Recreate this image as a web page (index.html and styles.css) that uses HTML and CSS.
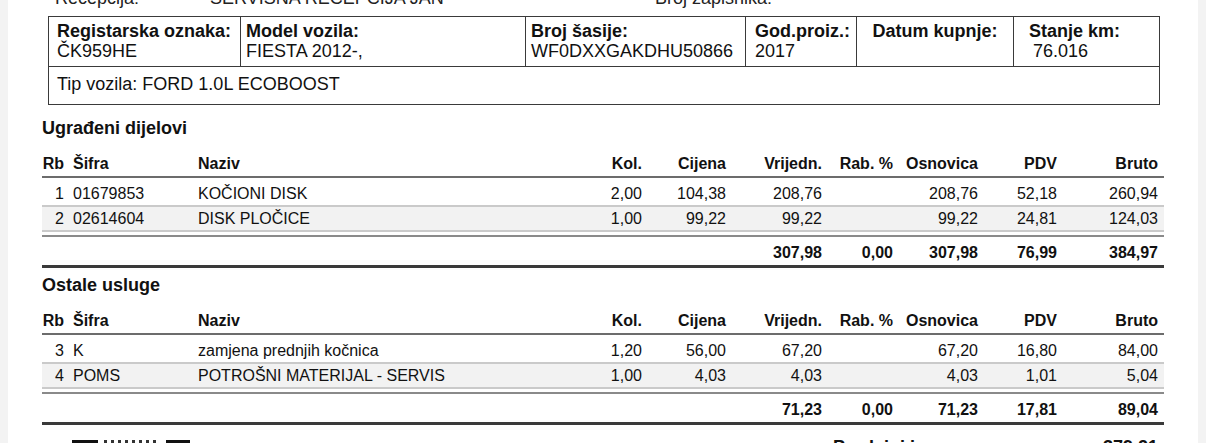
FILE: index.html
```html
<!DOCTYPE html>
<html lang="hr">
<head>
<meta charset="utf-8">
<title>Radni nalog</title>
<link rel="stylesheet" href="styles.css">
</head>
<body>
<div class="page">
  <div class="topline">
    <span class="tl-label">Recepcija:</span>
    <span class="tl-value">SERVISNA RECEPCIJA JAN</span>
    <span class="tl-label">Broj zapisnika:</span>
  </div>

  <div class="vehicle">
    <div class="vrow">
      <div class="vcell v1"><b>Registarska oznaka:</b><span>ČK959HE</span></div>
      <div class="vcell v2"><b>Model vozila:</b><span>FIESTA 2012-,</span></div>
      <div class="vcell v3"><b>Broj šasije:</b><span>WF0DXXGAKDHU50866</span></div>
      <div class="vcell v4"><b>God.proiz.:</b><span>2017</span></div>
      <div class="vcell v5"><b>Datum kupnje:</b><span></span></div>
      <div class="vcell v6"><b>Stanje km:</b><span class="km">76.016</span></div>
    </div>
    <div class="vtip">Tip vozila: FORD 1.0L ECOBOOST</div>
  </div>

  <h2 class="section">Ugrađeni dijelovi</h2>
  <div class="items">
    <div class="row head">
      <span class="r">Rb</span><span>Šifra</span><span>Naziv</span><span class="r">Kol.</span><span class="r">Cijena</span><span class="r">Vrijedn.</span><span class="r">Rab. %</span><span class="r">Osnovica</span><span class="r">PDV</span><span class="r">Bruto</span>
    </div>
    <div class="row item first">
      <span class="r">1</span><span>01679853</span><span>KOČIONI DISK</span><span class="r">2,00</span><span class="r">104,38</span><span class="r">208,76</span><span class="r"></span><span class="r">208,76</span><span class="r">52,18</span><span class="r">260,94</span>
    </div>
    <div class="row item alt">
      <span class="r">2</span><span>02614604</span><span>DISK PLOČICE</span><span class="r">1,00</span><span class="r">99,22</span><span class="r">99,22</span><span class="r"></span><span class="r">99,22</span><span class="r">24,81</span><span class="r">124,03</span>
    </div>
    <div class="row total">
      <span></span><span></span><span></span><span></span><span></span><span class="r">307,98</span><span class="r">0,00</span><span class="r">307,98</span><span class="r">76,99</span><span class="r">384,97</span>
    </div>
  </div>

  <h2 class="section">Ostale usluge</h2>
  <div class="items">
    <div class="row head">
      <span class="r">Rb</span><span>Šifra</span><span>Naziv</span><span class="r">Kol.</span><span class="r">Cijena</span><span class="r">Vrijedn.</span><span class="r">Rab. %</span><span class="r">Osnovica</span><span class="r">PDV</span><span class="r">Bruto</span>
    </div>
    <div class="row item first">
      <span class="r">3</span><span>K</span><span>zamjena prednjih kočnica</span><span class="r">1,20</span><span class="r">56,00</span><span class="r">67,20</span><span class="r"></span><span class="r">67,20</span><span class="r">16,80</span><span class="r">84,00</span>
    </div>
    <div class="row item alt">
      <span class="r">4</span><span>POMS</span><span>POTROŠNI MATERIJAL - SERVIS</span><span class="r">1,00</span><span class="r">4,03</span><span class="r">4,03</span><span class="r"></span><span class="r">4,03</span><span class="r">1,01</span><span class="r">5,04</span>
    </div>
    <div class="row total">
      <span></span><span></span><span></span><span></span><span></span><span class="r">71,23</span><span class="r">0,00</span><span class="r">71,23</span><span class="r">17,81</span><span class="r">89,04</span>
    </div>
  </div>

  <div class="footer">
    <svg class="logo" width="118" height="20" viewBox="0 0 118 20" aria-hidden="true">
      <rect x="0" y="0" width="26" height="20" fill="#111"/>
      <rect x="32" y="0" width="3" height="20" fill="#333"/>
      <rect x="39" y="0" width="3" height="20" fill="#333"/>
      <rect x="46" y="0" width="3" height="20" fill="#333"/>
      <rect x="53" y="0" width="3" height="20" fill="#333"/>
      <rect x="60" y="0" width="3" height="20" fill="#333"/>
      <rect x="67" y="0" width="3" height="20" fill="#333"/>
      <rect x="74" y="0" width="3" height="20" fill="#333"/>
      <rect x="81" y="0" width="3" height="20" fill="#333"/>
      <rect x="94" y="0" width="24" height="20" fill="#111"/>
    </svg>
    <span class="sum-label">Prodajni iznos:</span>
    <span class="sum-value">379,21</span>
  </div>
</div>
</body>
</html>
```

FILE: styles.css
```css
html, body {
  margin: 0;
  padding: 0;
  height: 100%;
}
body {
  background: #f3f3f3;
  font-family: "Liberation Sans", Arial, sans-serif;
  color: #111;
  overflow: hidden;
}
.page {
  margin: 0 8px;
  width: 1190px;
  min-height: 100%;
  background: #fff;
  padding-left: 34px;
  box-sizing: border-box;
}
.topline {
  display: grid;
  grid-template-columns: 155px 445px auto;
  margin-top: -12px;
  padding-left: 13px;
  height: 20px;
  line-height: 20px;
  font-size: 18px;
  color: #222;
}
.vehicle {
  margin: 8px 0 0 6px;
  width: 1112px;
  border: 1px solid #3a3a3a;
  box-sizing: border-box;
  font-size: 18px;
}
.vrow {
  display: grid;
  grid-template-columns: 191px 285px 220px 111px 157px 146px;
  height: 50px;
  border-bottom: 1px solid #3a3a3a;
  box-sizing: border-box;
}
.vcell {
  display: flex;
  flex-direction: column;
  padding-top: 4px;
  line-height: 20px;
  box-sizing: border-box;
}
.vcell + .vcell {
  border-left: 1px solid #3a3a3a;
}
.vcell span {
  height: 20px;
}
.v1 { padding-left: 8px; }
.v2, .v3 { padding-left: 5px; }
.v4 { padding-left: 9px; }
.v5 { align-items: center; }
.v6 { padding-left: 15px; }
.km { padding-left: 4px; }
.vtip {
  height: 37px;
  padding: 7px 0 0 8px;
  line-height: 20px;
  box-sizing: border-box;
}
.section {
  margin: 12px 0 0;
  font-size: 18px;
  line-height: 22px;
  font-weight: bold;
}
.items {
  width: 1122px;
  font-size: 16px;
}
.row {
  display: grid;
  grid-template-columns: 28px 125px 365px 88px 84px 96px 71px 85px 79px 101px;
  line-height: 20px;
}
.row span {
  padding-left: 3px;
  white-space: nowrap;
}
.row span.r {
  text-align: right;
  padding-left: 0;
  padding-right: 6px;
}
.row.head {
  font-weight: bold;
  padding: 15px 0 2px;
  border-bottom: 2px solid #6c6c6c;
}
.row.item {
  padding: 2px 0 1px;
  border-bottom: 2px solid #cacaca;
}
.row.item.first {
  margin-top: 4px;
}
.row.item.alt {
  background: #f2f2f2;
}
.row.total {
  margin-top: 3px;
  font-weight: bold;
  padding: 6px 0 2px;
  border-top: 2px solid #8a8a8a;
  border-bottom: 3px solid #3a3a3a;
}
.items + .section {
  margin-top: 6px;
}
.footer {
  display: flex;
  align-items: flex-start;
  width: 1122px;
  margin-top: 11px;
  font-size: 18px;
  font-weight: bold;
  line-height: 22px;
}
.logo {
  margin: 4px 0 0 30px;
  flex: none;
}
.sum-label {
  margin-left: 643px;
}
.sum-value {
  margin-left: auto;
  padding-right: 6px;
}
```
